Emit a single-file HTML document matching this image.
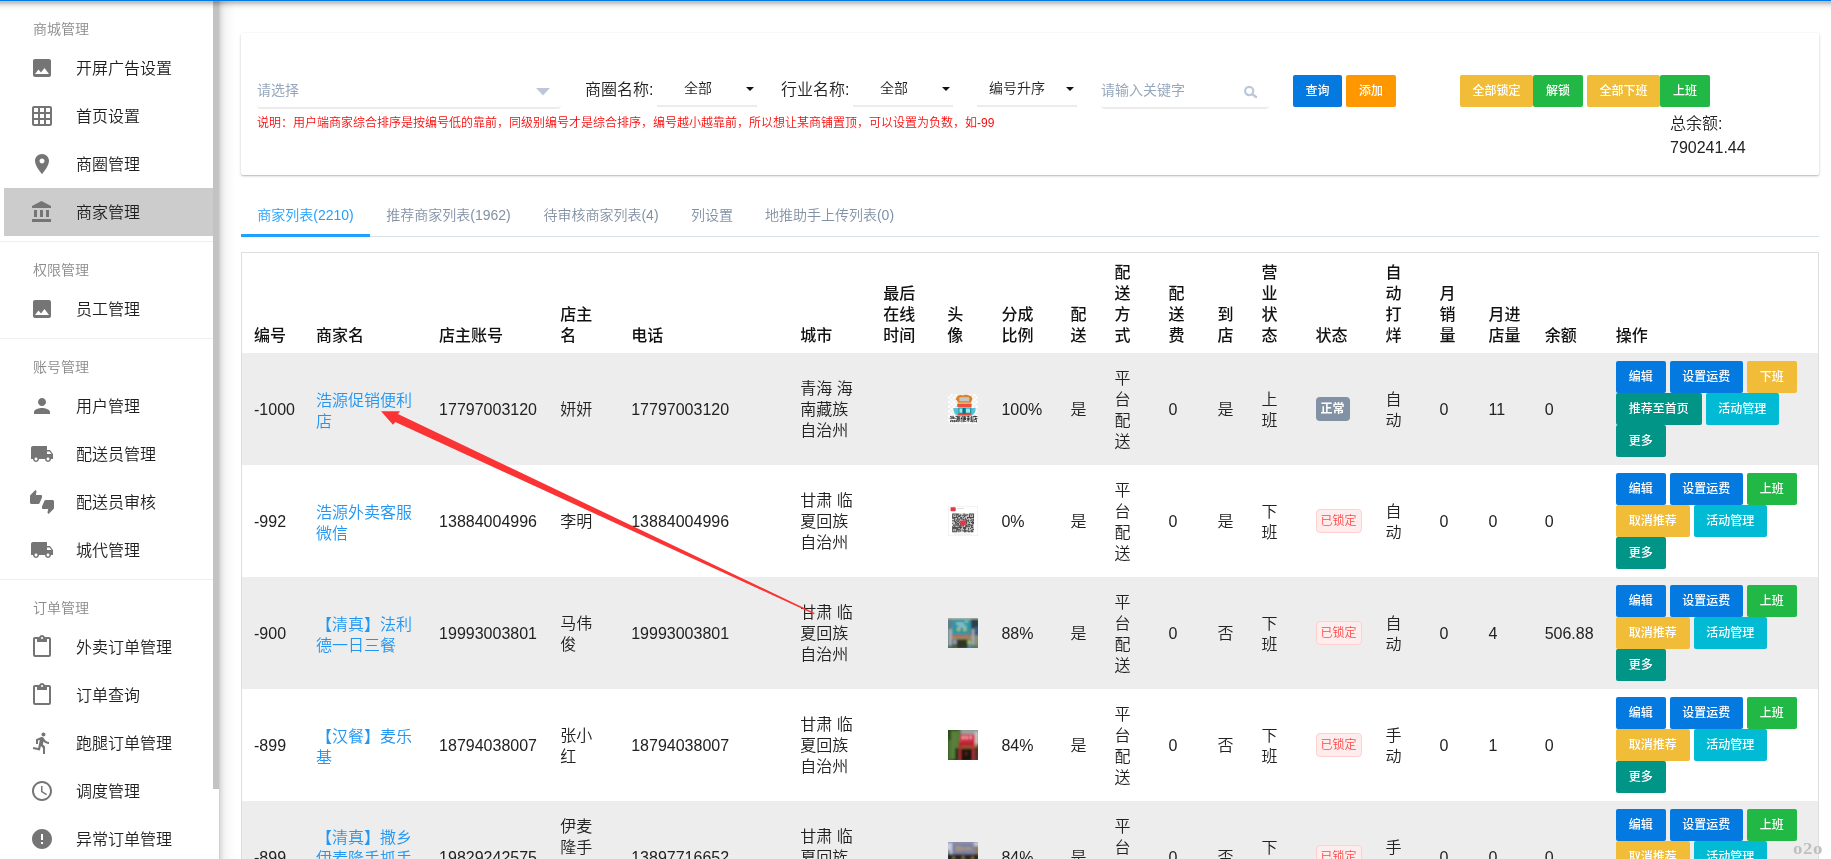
<!DOCTYPE html>
<html lang="zh-CN">
<head>
<meta charset="utf-8">
<title>商家管理</title>
<style>
*{box-sizing:border-box}
html,body{margin:0;padding:0}
body{width:1831px;height:859px;overflow:hidden;background:#fff;position:relative;
 font-family:"Liberation Sans","Noto Sans CJK SC",sans-serif;color:#212121;font-size:14px;font-weight:350}
#all{position:absolute;left:0;top:0;width:1831px;height:859px;will-change:transform;overflow:hidden}
#topbar{position:absolute;left:0;top:0;width:1831px;height:1px;background:#0078e3;z-index:21}
#topsh{position:absolute;left:0;top:1px;width:1831px;height:11px;z-index:20;background:linear-gradient(to bottom,rgba(0,0,0,0.239) 0,rgba(0,0,0,0.239) 0.5px, rgba(0,0,0,0.239) 1.5px, rgba(0,0,0,0.184) 2.5px, rgba(0,0,0,0.129) 3.5px, rgba(0,0,0,0.090) 4.5px, rgba(0,0,0,0.055) 5.5px, rgba(0,0,0,0.035) 6.5px, rgba(0,0,0,0.020) 7.5px, rgba(0,0,0,0.008) 8.5px, rgba(0,0,0,0.004) 9.5px, rgba(0,0,0,0) 10.5px)}
/* ---------- sidebar ---------- */
#side{position:absolute;left:0;top:0;width:219px;height:859px;background:#fff;z-index:10;overflow:hidden;padding-top:1px}
#side .thumb{position:absolute;left:213px;top:0;width:6px;height:789px;background:#c3c3c3}
.grp{border-bottom:1px solid #efefef;padding-bottom:5px}
.grp .lab{height:43px;line-height:56px;padding-left:33px;font-size:14px;color:#8a8a8a}
.it{height:48px;position:relative;margin-left:4px;width:209px}
.it svg{position:absolute;left:26px;top:12px;width:24px;height:24px;fill:#757575}
.it span{position:absolute;left:72px;top:1px;line-height:48px;font-size:16px;color:#1f1f1f;white-space:nowrap}
.it.on{background:#ccc}
#sidesh{position:absolute;left:219px;top:0;width:17px;height:859px;z-index:9;background:linear-gradient(to right,rgba(0,0,0,0.176) 0,rgba(0,0,0,0.176) 0.5px, rgba(0,0,0,0.137) 1.5px, rgba(0,0,0,0.106) 2.5px, rgba(0,0,0,0.086) 3.5px, rgba(0,0,0,0.067) 4.5px, rgba(0,0,0,0.051) 5.5px, rgba(0,0,0,0.043) 6.5px, rgba(0,0,0,0.035) 7.5px, rgba(0,0,0,0.027) 8.5px, rgba(0,0,0,0.024) 9.5px, rgba(0,0,0,0.020) 10.5px, rgba(0,0,0,0.016) 11.5px, rgba(0,0,0,0.012) 12.5px, rgba(0,0,0,0.008) 13.5px, rgba(0,0,0,0.008) 14.5px, rgba(0,0,0,0.004) 15.5px, rgba(0,0,0,0) 16.5px)}
/* ---------- filter card ---------- */
#card{position:absolute;left:241px;top:33px;width:1578px;height:142px;background:#fff;border-radius:2px;
 box-shadow:0 1px 3px 0 rgba(0,0,0,.2),0 1px 1px 0 rgba(0,0,0,.12)}
#card .abs{position:absolute;white-space:nowrap}
.btn{display:inline-block;height:32px;line-height:33px;font-weight:500;text-align:center;color:#fff;font-size:12px;border-radius:2px;vertical-align:top;white-space:nowrap}
.b-blue{background:#0479e0}.b-orange{background:#ff9800}.b-yellow{background:#f1bd39}.b-green{background:#22b845}.b-teal{background:#009587}.b-cyan{background:#00bbd3}
/* ---------- tabs ---------- */
#tabs{position:absolute;left:241px;top:195px;width:1578px;height:42px;border-bottom:1px solid #d9e1ea}
#tabs span{position:absolute;top:0;height:42px;line-height:40px;font-size:14px;color:#8391a5;text-align:center;white-space:nowrap}
#tabs span.on{color:#20a0ff;border-bottom:3px solid #20a0ff}
/* ---------- table ---------- */
#tw{position:absolute;left:241px;top:252px;width:1578px;height:620px;border:1px solid #dedede;border-bottom:0;overflow:hidden;background:#fff}
table{border-collapse:collapse;table-layout:fixed;width:1576px;font-size:16px;line-height:21px;color:#222}
th{font-weight:500;text-align:left;vertical-align:bottom;padding:9px 0 7px 12px;height:100px;color:#111}
td{vertical-align:middle;padding:9px 0 8px 12px;height:112px;word-break:break-all}
td.n{padding:8px 0 8px 12px}
td.c{padding:8px 0 8px 12px}
tr.odd{background:#ededed}
a.lk{color:#2196f3;text-decoration:none;position:relative;top:1px}
.tag{display:inline-block;height:24px;line-height:22px;padding:0;text-align:center;font-size:12px;border-radius:4px;border:1px solid transparent;white-space:nowrap;vertical-align:middle}
.tag.n{background:#8391a5;color:#fff;font-weight:bold}
.tag.d{background:#ffecec;border-color:#ffd0d0;color:#ff4949}
td.op{padding:8px 0 8px 12px;font-size:0;line-height:0}
td.op .btn{margin-right:4px}
.av{display:block;width:30px;height:30px;margin-left:1px}
#arrow{position:absolute;left:0;top:0;width:1831px;height:859px;z-index:5;pointer-events:none}
#wm{position:absolute;left:1793px;top:837px;font-family:"Liberation Serif",serif;font-size:16px;font-weight:bold;color:#bfbfbf;z-index:30;line-height:24px;letter-spacing:.5px;transform:scaleX(1.18);transform-origin:0 0}
</style>
</head>
<body>
<div id="all">
<div id="topbar"></div><div id="topsh"></div><div id="sidesh"></div>
<div id="side"><div class="thumb"></div>
<div class="grp"><div class="lab">商城管理</div>
<div class="it"><svg viewBox="0 0 24 24"><path d="M21 19V5c0-1.1-.9-2-2-2H5c-1.1 0-2 .9-2 2v14c0 1.1.9 2 2 2h14c1.1 0 2-.9 2-2zM8.5 13.5l2.5 3.01L14.5 12l4.5 6H5l3.5-4.5z"/></svg><span>开屏广告设置</span></div>
<div class="it"><svg viewBox="0 0 24 24"><path d="M20 2H4c-1.1 0-2 .9-2 2v16c0 1.1.9 2 2 2h16c1.1 0 2-.9 2-2V4c0-1.1-.9-2-2-2zM8 20H4v-4h4v4zm0-6H4v-4h4v4zm0-6H4V4h4v4zm6 12h-4v-4h4v4zm0-6h-4v-4h4v4zm0-6h-4V4h4v4zm6 12h-4v-4h4v4zm0-6h-4v-4h4v4zm0-6h-4V4h4v4z"/></svg><span>首页设置</span></div>
<div class="it"><svg viewBox="0 0 24 24"><path d="M12 2C8.13 2 5 5.13 5 9c0 5.25 7 13 7 13s7-7.75 7-13c0-3.87-3.13-7-7-7zm0 9.5c-1.38 0-2.5-1.12-2.5-2.5s1.12-2.5 2.5-2.5 2.5 1.12 2.5 2.5-1.12 2.5-2.5 2.5z"/></svg><span>商圈管理</span></div>
<div class="it on"><svg viewBox="0 0 24 24"><path d="M4 10v7h3v-7H4zm6 0v7h3v-7h-3zM2 22h19v-3H2v3zm14-12v7h3v-7h-3zm-4.5-9L2 6v2h19V6l-9.5-5z"/></svg><span>商家管理</span></div>
</div>
<div class="grp"><div class="lab">权限管理</div>
<div class="it"><svg viewBox="0 0 24 24"><path d="M21 19V5c0-1.1-.9-2-2-2H5c-1.1 0-2 .9-2 2v14c0 1.1.9 2 2 2h14c1.1 0 2-.9 2-2zM8.5 13.5l2.5 3.01L14.5 12l4.5 6H5l3.5-4.5z"/></svg><span>员工管理</span></div>
</div>
<div class="grp"><div class="lab">账号管理</div>
<div class="it"><svg viewBox="0 0 24 24"><path d="M12 12c2.21 0 4-1.79 4-4s-1.79-4-4-4-4 1.79-4 4 1.79 4 4 4zm0 2c-2.67 0-8 1.34-8 4v2h16v-2c0-2.66-5.33-4-8-4z"/></svg><span>用户管理</span></div>
<div class="it"><svg viewBox="0 0 24 24"><path d="M20 8h-3V4H3c-1.1 0-2 .9-2 2v11h2c0 1.66 1.34 3 3 3s3-1.34 3-3h6c0 1.66 1.34 3 3 3s3-1.34 3-3h2v-5l-3-4zM6 18.5c-.83 0-1.5-.67-1.5-1.5s.67-1.5 1.5-1.5 1.5.67 1.5 1.5-.67 1.5-1.5 1.5zm13.5-9l1.96 2.5H17V9.5h2.5zm-1.5 9c-.83 0-1.5-.67-1.5-1.5s.67-1.5 1.5-1.5 1.5.67 1.5 1.5-.67 1.5-1.5 1.5z"/></svg><span>配送员管理</span></div>
<div class="it"><svg viewBox="0 0 24 24"><path d="M12 6c0-.55-.45-1-1-1H5.82l.66-3.18.02-.23c0-.31-.13-.59-.33-.8L5.38 0 .44 4.94C.17 5.21 0 5.59 0 6v6.5c0 .83.67 1.5 1.5 1.5h6.75c.62 0 1.15-.38 1.38-.91l2.26-5.29c.07-.17.11-.36.11-.55V6zm10.5 4h-6.75c-.62 0-1.15.38-1.38.91l-2.26 5.29c-.07.17-.11.36-.11.55V18c0 .55.45 1 1 1h5.18l-.66 3.18-.02.24c0 .31.13.59.33.8l.79.78 4.94-4.94c.27-.27.44-.65.44-1.060v-6.500c0-.83-.67-1.5-1.5-1.5z"/></svg><span>配送员审核</span></div>
<div class="it"><svg viewBox="0 0 24 24"><path d="M20 8h-3V4H3c-1.1 0-2 .9-2 2v11h2c0 1.66 1.34 3 3 3s3-1.34 3-3h6c0 1.66 1.34 3 3 3s3-1.34 3-3h2v-5l-3-4zM6 18.5c-.83 0-1.5-.67-1.5-1.5s.67-1.5 1.5-1.5 1.5.67 1.5 1.5-.67 1.5-1.5 1.5zm13.5-9l1.96 2.5H17V9.5h2.5zm-1.5 9c-.83 0-1.5-.67-1.5-1.5s.67-1.5 1.5-1.5 1.5.67 1.5 1.5-.67 1.5-1.5 1.5z"/></svg><span>城代管理</span></div>
</div>
<div class="grp"><div class="lab">订单管理</div>
<div class="it"><svg viewBox="0 0 24 24"><path d="M19 2h-4.180C14.400.840 13.300 0 12 0c-1.300 0-2.400.840-2.820 2H5c-1.100 0-2 .900-2 2v16c0 1.100.900 2 2 2h14c1.100 0 2-.900 2-2V4c0-1.100-.900-2-2-2zm-7 0c.550 0 1 .450 1 1s-.450 1-1 1-1-.450-1-1 .450-1 1-1zm7 18H5V4h2v3h10V4h2v16z"/></svg><span>外卖订单管理</span></div>
<div class="it"><svg viewBox="0 0 24 24"><path d="M19 2h-4.180C14.400.840 13.300 0 12 0c-1.300 0-2.400.840-2.820 2H5c-1.100 0-2 .900-2 2v16c0 1.100.900 2 2 2h14c1.100 0 2-.900 2-2V4c0-1.100-.900-2-2-2zm-7 0c.550 0 1 .450 1 1s-.450 1-1 1-1-.450-1-1 .450-1 1-1zm7 18H5V4h2v3h10V4h2v16z"/></svg><span>订单查询</span></div>
<div class="it"><svg viewBox="0 0 24 24"><path d="M13.490 5.480c1.100 0 2-.900 2-2s-.900-2-2-2-2 .900-2 2 .900 2 2 2zm-3.600 13.900l1-4.400 2.100 2v6h2v-7.500l-2.100-2 .600-3c1.300 1.500 3.300 2.500 5.500 2.500v-2c-1.900 0-3.500-1-4.300-2.400l-1-1.600c-.400-.600-1-1-1.700-1-.300 0-.500.100-.800.100l-5.200 2.200v4.700h2v-3.400l1.800-.700-1.600 8.100-4.900-1-.400 2 7 1.400z"/></svg><span>跑腿订单管理</span></div>
<div class="it"><svg viewBox="0 0 24 24"><path d="M11.990 2C6.470 2 2 6.480 2 12s4.470 10 9.990 10C17.520 22 22 17.520 22 12S17.520 2 11.990 2zM12 20c-4.420 0-8-3.580-8-8s3.580-8 8-8 8 3.580 8 8-3.580 8-8 8zm.5-13H11v6l5.250 3.150.750-1.230-4.500-2.670z"/></svg><span>调度管理</span></div>
<div class="it"><svg viewBox="0 0 24 24"><path d="M12 2C6.480 2 2 6.480 2 12s4.480 10 10 10 10-4.480 10-10S17.520 2 12 2zm1 15h-2v-2h2v2zm0-4h-2V7h2v6z"/></svg><span>异常订单管理</span></div>
</div>
</div>
<div id="card">
<div class="abs" style="left:16px;top:42px;width:304px;height:34px;border-bottom:2px solid #ececec;border-radius:0 0 4px 4px;line-height:30px;font-size:14px;font-weight:400;color:#97a8be">请选择<svg style="position:absolute;left:279px;top:13px" width="14" height="8" viewBox="0 0 14 8"><path d="M0 0h14L7 7.500z" fill="#bcc8d9"/></svg></div>
<div class="abs" style="left:344px;top:45px;font-size:16px;line-height:24px;color:#222">商圈名称:</div>
<div class="abs" style="left:416px;top:42px;width:100px;height:32px;border-bottom:2px solid #ececec;font-size:14px;line-height:26px;padding-left:27px;color:#222">全部<svg style="position:absolute;right:3px;top:12px" width="8" height="4" viewBox="0 0 8 4"><path d="M0 0h8L4 4z" fill="#111"/></svg></div>
<div class="abs" style="left:540px;top:45px;font-size:16px;line-height:24px;color:#222">行业名称:</div>
<div class="abs" style="left:612px;top:42px;width:100px;height:32px;border-bottom:2px solid #ececec;font-size:14px;line-height:26px;padding-left:27px;color:#222">全部<svg style="position:absolute;right:3px;top:12px" width="8" height="4" viewBox="0 0 8 4"><path d="M0 0h8L4 4z" fill="#111"/></svg></div>
<div class="abs" style="left:736px;top:42px;width:100px;height:32px;border-bottom:2px solid #ececec;font-size:14px;line-height:26px;padding-left:12px;color:#222">编号升序<svg style="position:absolute;right:3px;top:12px" width="8" height="4" viewBox="0 0 8 4"><path d="M0 0h8L4 4z" fill="#111"/></svg></div>
<div class="abs" style="left:860px;top:42px;width:168px;height:34px;border-bottom:2px solid #ececec;border-radius:0 0 4px 4px;line-height:30px;font-size:14px;font-weight:400;color:#97a8be">请输入关键字<svg style="position:absolute;left:143px;top:10px" width="14" height="14" viewBox="0 0 14 14"><circle cx="5.200" cy="6" r="4.100" fill="none" stroke="#bcc8d9" stroke-width="2.200"/><path d="M8.500 9.300L12 12" stroke="#bcc8d9" stroke-width="2.400" stroke-linecap="round"/></svg></div>
<div class="abs" style="left:16px;top:83px;font-size:12px;line-height:14px;color:#f90b0b">说明：用户端商家综合排序是按编号低的靠前，同级别编号才是综合排序，编号越小越靠前，所以想让某商铺置顶，可以设置为负数，如-99</div>
<div class="abs" style="left:1052px;top:42px;"><span class="btn b-blue" style="width:49px">查询</span></div>
<div class="abs" style="left:1105px;top:42px;"><span class="btn b-orange" style="width:50px">添加</span></div>
<div class="abs" style="left:1219px;top:42px;"><span class="btn b-yellow" style="width:73px">全部锁定</span></div>
<div class="abs" style="left:1292px;top:42px;"><span class="btn b-green" style="width:50px">解锁</span></div>
<div class="abs" style="left:1346px;top:42px;"><span class="btn b-yellow" style="width:73px">全部下班</span></div>
<div class="abs" style="left:1419px;top:42px;"><span class="btn b-green" style="width:50px">上班</span></div>
<div class="abs" style="left:1429px;top:78px;font-size:16px;line-height:24px;color:#222;white-space:normal;width:90px"><span style="position:relative;top:1px">总余额:</span><br><span style="position:relative;top:1px">790241.44</span></div>
</div>
<div id="tabs">
<span class="on" style="left:0px;width:129px">商家列表(2210)</span>
<span class="" style="left:129px;width:157px">推荐商家列表(1962)</span>
<span class="" style="left:286px;width:148px">待审核商家列表(4)</span>
<span class="" style="left:434px;width:74px">列设置</span>
<span class="" style="left:508px;width:161px">地推助手上传列表(0)</span>
</div>
<div id="tw">
<table><colgroup><col style="width:62px"><col style="width:123px"><col style="width:121px"><col style="width:71px"><col style="width:169px"><col style="width:83px"><col style="width:64px"><col style="width:54px"><col style="width:69px"><col style="width:44px"><col style="width:54px"><col style="width:49px"><col style="width:44px"><col style="width:54px"><col style="width:70px"><col style="width:54px"><col style="width:49px"><col style="width:56px"><col style="width:71px"><col style="width:214px"></colgroup>
<thead><tr><th>编号</th><th>商家名</th><th>店主账号</th><th>店主<br>名</th><th>电话</th><th>城市</th><th>最后<br>在线<br>时间</th><th>头<br>像</th><th>分成<br>比例</th><th>配<br>送</th><th>配<br>送<br>方<br>式</th><th>配<br>送<br>费</th><th>到<br>店</th><th>营<br>业<br>状<br>态</th><th>状态</th><th>自<br>动<br>打<br>烊</th><th>月<br>销<br>量</th><th>月进<br>店量</th><th>余额</th><th>操作</th></tr></thead><tbody>
<tr class="odd"><td class="n">-1000</td><td><a class="lk">浩源促销便利<br>店</a></td><td class="n">17797003120</td><td>妍妍</td><td class="n">17797003120</td><td>青海 海<br>南藏族<br>自治州</td><td></td><td class="c"><svg class="av" viewBox="0 0 30 30"><defs><pattern id="ck" width="4.600" height="4.600" patternUnits="userSpaceOnUse"><rect width="4.600" height="4.600" fill="#fff"/><rect width="2.300" height="2.300" fill="#ececec"/><rect x="2.300" y="2.300" width="2.300" height="2.300" fill="#ececec"/></pattern><filter id="bl1"><feGaussianBlur stdDeviation="0.350"/></filter></defs><rect width="30" height="30" fill="url(#ck)"/><g filter="url(#bl1)"><polygon points="7.500,5.500 9.500,2 12.500,.800 15,1.400 17.500,.600 20.500,1.200 23,2 24.500,4.600 23,8.800 10,8.800 9,6.500" fill="#d8842c"/><rect x="11.400" y="3.200" width="9.800" height="4" rx=".500" fill="#c6c6c6"/><rect x="9.200" y="9.400" width="14.400" height="3.800" rx=".500" fill="#e8523f"/><path d="M5.400 14h22.200c.300 4-2 7.400-5 8H10.400c-3-.600-5.300-4-5-8z" fill="#58c2d2"/><rect x="10.400" y="13.600" width="12.900" height="6.800" fill="#2493ab"/><rect x="11.500" y="14.500" width="2.700" height="4.200" fill="#9be8ec"/><rect x="18" y="14.500" width="4" height="4.200" fill="#9be8ec"/><rect x="15" y="14" width="2.200" height="6" fill="#0f6f88"/><rect x="9.800" y="20" width="13.200" height="1" fill="#d5503c"/><text x="15.600" y="27.300" font-size="5.700" font-weight="bold" text-anchor="middle" fill="#151515" font-family="'Noto Sans CJK SC',sans-serif">浩源便利店</text></g></svg></td><td class="n">100%</td><td>是</td><td>平<br>台<br>配<br>送</td><td class="n">0</td><td>是</td><td>上<br>班</td><td class="c"><span class="tag n" style="width:34px">正常</span></td><td>自<br>动</td><td class="n">0</td><td class="n">11</td><td class="n">0</td><td class="op"><span class="btn b-blue" style="width:50px">编辑</span><span class="btn b-blue" style="width:73px">设置运费</span><span class="btn b-yellow" style="width:50px">下班</span><br><span class="btn b-teal" style="width:86px">推荐至首页</span><span class="btn b-cyan" style="width:73px">活动管理</span><br><span class="btn b-teal" style="width:50px">更多</span></td></tr>
<tr class="even"><td class="n">-992</td><td><a class="lk">浩源外卖客服<br>微信</a></td><td class="n">13884004996</td><td>李明</td><td class="n">13884004996</td><td>甘肃 临<br>夏回族<br>自治州</td><td></td><td class="c"><svg class="av" viewBox="0 0 30 30"><defs><filter id="bl2"><feGaussianBlur stdDeviation="0.380"/></filter></defs><rect width="30" height="30" fill="#fff"/><rect x=".250" y=".250" width="29.500" height="29.500" fill="none" stroke="#e9e9e9" stroke-width=".600"/><g filter="url(#bl2)"><rect x="2.500" y="1.200" width="5.200" height="4.100" rx=".800" fill="#e5364a"/><rect x="9" y="2.200" width="5" height=".700" fill="#cfcfcf"/><rect x="14" y="2.200" width="1.800" height=".700" fill="#b9d3ee"/><rect x="4.200" y="7.600" width="21.800" height="18.600" fill="#c9c9c9"/><g fill="#343434"><rect x="4.20" y="7.60" width="1.03" height="0.89"/><rect x="4.20" y="8.45" width="1.03" height="0.89"/><rect x="4.20" y="9.29" width="1.03" height="0.89"/><rect x="4.20" y="10.14" width="1.03" height="0.89"/><rect x="4.20" y="10.98" width="1.03" height="0.89"/><rect x="4.20" y="11.83" width="1.03" height="0.89"/><rect x="4.20" y="14.36" width="1.03" height="0.89"/><rect x="4.20" y="16.90" width="1.03" height="0.89"/><rect x="4.20" y="20.28" width="1.03" height="0.89"/><rect x="4.20" y="21.13" width="1.03" height="0.89"/><rect x="4.20" y="21.97" width="1.03" height="0.89"/><rect x="4.20" y="22.82" width="1.03" height="0.89"/><rect x="4.20" y="23.66" width="1.03" height="0.89"/><rect x="4.20" y="24.51" width="1.03" height="0.89"/><rect x="4.20" y="25.35" width="1.03" height="0.89"/><rect x="5.19" y="7.60" width="1.03" height="0.89"/><rect x="5.19" y="10.98" width="1.03" height="0.89"/><rect x="5.19" y="11.83" width="1.03" height="0.89"/><rect x="5.19" y="14.36" width="1.03" height="0.89"/><rect x="5.19" y="18.59" width="1.03" height="0.89"/><rect x="5.19" y="19.44" width="1.03" height="0.89"/><rect x="5.19" y="21.13" width="1.03" height="0.89"/><rect x="5.19" y="21.97" width="1.03" height="0.89"/><rect x="5.19" y="25.35" width="1.03" height="0.89"/><rect x="6.18" y="7.60" width="1.03" height="0.89"/><rect x="6.18" y="9.29" width="1.03" height="0.89"/><rect x="6.18" y="10.98" width="1.03" height="0.89"/><rect x="6.18" y="11.83" width="1.03" height="0.89"/><rect x="6.18" y="12.67" width="1.03" height="0.89"/><rect x="6.18" y="13.52" width="1.03" height="0.89"/><rect x="6.18" y="14.36" width="1.03" height="0.89"/><rect x="6.18" y="15.21" width="1.03" height="0.89"/><rect x="6.18" y="18.59" width="1.03" height="0.89"/><rect x="6.18" y="20.28" width="1.03" height="0.89"/><rect x="6.18" y="21.13" width="1.03" height="0.89"/><rect x="6.18" y="21.97" width="1.03" height="0.89"/><rect x="6.18" y="23.66" width="1.03" height="0.89"/><rect x="6.18" y="25.35" width="1.03" height="0.89"/><rect x="7.17" y="7.60" width="1.03" height="0.89"/><rect x="7.17" y="10.98" width="1.03" height="0.89"/><rect x="7.17" y="15.21" width="1.03" height="0.89"/><rect x="7.17" y="16.05" width="1.03" height="0.89"/><rect x="7.17" y="16.90" width="1.03" height="0.89"/><rect x="7.17" y="17.75" width="1.03" height="0.89"/><rect x="7.17" y="19.44" width="1.03" height="0.89"/><rect x="7.17" y="21.13" width="1.03" height="0.89"/><rect x="7.17" y="21.97" width="1.03" height="0.89"/><rect x="7.17" y="25.35" width="1.03" height="0.89"/><rect x="8.16" y="7.60" width="1.03" height="0.89"/><rect x="8.16" y="8.45" width="1.03" height="0.89"/><rect x="8.16" y="9.29" width="1.03" height="0.89"/><rect x="8.16" y="10.14" width="1.03" height="0.89"/><rect x="8.16" y="10.98" width="1.03" height="0.89"/><rect x="8.16" y="13.52" width="1.03" height="0.89"/><rect x="8.16" y="14.36" width="1.03" height="0.89"/><rect x="8.16" y="16.05" width="1.03" height="0.89"/><rect x="8.16" y="17.75" width="1.03" height="0.89"/><rect x="8.16" y="18.59" width="1.03" height="0.89"/><rect x="8.16" y="21.13" width="1.03" height="0.89"/><rect x="8.16" y="21.97" width="1.03" height="0.89"/><rect x="8.16" y="22.82" width="1.03" height="0.89"/><rect x="8.16" y="23.66" width="1.03" height="0.89"/><rect x="8.16" y="24.51" width="1.03" height="0.89"/><rect x="8.16" y="25.35" width="1.03" height="0.89"/><rect x="9.15" y="7.60" width="1.03" height="0.89"/><rect x="9.15" y="8.45" width="1.03" height="0.89"/><rect x="9.15" y="10.98" width="1.03" height="0.89"/><rect x="9.15" y="11.83" width="1.03" height="0.89"/><rect x="9.15" y="12.67" width="1.03" height="0.89"/><rect x="9.15" y="13.52" width="1.03" height="0.89"/><rect x="9.15" y="15.21" width="1.03" height="0.89"/><rect x="9.15" y="16.90" width="1.03" height="0.89"/><rect x="9.15" y="17.75" width="1.03" height="0.89"/><rect x="9.15" y="19.44" width="1.03" height="0.89"/><rect x="9.15" y="21.13" width="1.03" height="0.89"/><rect x="9.15" y="21.97" width="1.03" height="0.89"/><rect x="9.15" y="22.82" width="1.03" height="0.89"/><rect x="9.15" y="23.66" width="1.03" height="0.89"/><rect x="10.15" y="7.60" width="1.03" height="0.89"/><rect x="10.15" y="9.29" width="1.03" height="0.89"/><rect x="10.15" y="10.14" width="1.03" height="0.89"/><rect x="10.15" y="12.67" width="1.03" height="0.89"/><rect x="10.15" y="14.36" width="1.03" height="0.89"/><rect x="10.15" y="15.21" width="1.03" height="0.89"/><rect x="10.15" y="16.90" width="1.03" height="0.89"/><rect x="10.15" y="17.75" width="1.03" height="0.89"/><rect x="10.15" y="18.59" width="1.03" height="0.89"/><rect x="10.15" y="19.44" width="1.03" height="0.89"/><rect x="10.15" y="21.13" width="1.03" height="0.89"/><rect x="10.15" y="22.82" width="1.03" height="0.89"/><rect x="10.15" y="23.66" width="1.03" height="0.89"/><rect x="10.15" y="25.35" width="1.03" height="0.89"/><rect x="11.14" y="9.29" width="1.03" height="0.89"/><rect x="11.14" y="10.14" width="1.03" height="0.89"/><rect x="11.14" y="12.67" width="1.03" height="0.89"/><rect x="11.14" y="13.52" width="1.03" height="0.89"/><rect x="11.14" y="16.05" width="1.03" height="0.89"/><rect x="11.14" y="19.44" width="1.03" height="0.89"/><rect x="11.14" y="20.28" width="1.03" height="0.89"/><rect x="11.14" y="21.13" width="1.03" height="0.89"/><rect x="11.14" y="22.82" width="1.03" height="0.89"/><rect x="11.14" y="24.51" width="1.03" height="0.89"/><rect x="12.13" y="8.45" width="1.03" height="0.89"/><rect x="12.13" y="9.29" width="1.03" height="0.89"/><rect x="12.13" y="10.98" width="1.03" height="0.89"/><rect x="12.13" y="11.83" width="1.03" height="0.89"/><rect x="12.13" y="15.21" width="1.03" height="0.89"/><rect x="12.13" y="16.90" width="1.03" height="0.89"/><rect x="12.13" y="17.75" width="1.03" height="0.89"/><rect x="12.13" y="18.59" width="1.03" height="0.89"/><rect x="12.13" y="19.44" width="1.03" height="0.89"/><rect x="12.13" y="20.28" width="1.03" height="0.89"/><rect x="12.13" y="21.13" width="1.03" height="0.89"/><rect x="12.13" y="21.97" width="1.03" height="0.89"/><rect x="12.13" y="23.66" width="1.03" height="0.89"/><rect x="12.13" y="24.51" width="1.03" height="0.89"/><rect x="13.12" y="10.98" width="1.03" height="0.89"/><rect x="13.12" y="11.83" width="1.03" height="0.89"/><rect x="13.12" y="12.67" width="1.03" height="0.89"/><rect x="13.12" y="16.05" width="1.03" height="0.89"/><rect x="13.12" y="17.75" width="1.03" height="0.89"/><rect x="13.12" y="19.44" width="1.03" height="0.89"/><rect x="13.12" y="21.13" width="1.03" height="0.89"/><rect x="14.11" y="9.29" width="1.03" height="0.89"/><rect x="14.11" y="12.67" width="1.03" height="0.89"/><rect x="14.11" y="16.90" width="1.03" height="0.89"/><rect x="14.11" y="19.44" width="1.03" height="0.89"/><rect x="14.11" y="23.66" width="1.03" height="0.89"/><rect x="15.10" y="7.60" width="1.03" height="0.89"/><rect x="15.10" y="9.29" width="1.03" height="0.89"/><rect x="15.10" y="10.98" width="1.03" height="0.89"/><rect x="15.10" y="12.67" width="1.03" height="0.89"/><rect x="15.10" y="13.52" width="1.03" height="0.89"/><rect x="15.10" y="15.21" width="1.03" height="0.89"/><rect x="15.10" y="17.75" width="1.03" height="0.89"/><rect x="15.10" y="18.59" width="1.03" height="0.89"/><rect x="15.10" y="19.44" width="1.03" height="0.89"/><rect x="15.10" y="21.13" width="1.03" height="0.89"/><rect x="15.10" y="21.97" width="1.03" height="0.89"/><rect x="15.10" y="24.51" width="1.03" height="0.89"/><rect x="16.09" y="7.60" width="1.03" height="0.89"/><rect x="16.09" y="9.29" width="1.03" height="0.89"/><rect x="16.09" y="10.14" width="1.03" height="0.89"/><rect x="16.09" y="13.52" width="1.03" height="0.89"/><rect x="16.09" y="15.21" width="1.03" height="0.89"/><rect x="16.09" y="16.05" width="1.03" height="0.89"/><rect x="16.09" y="16.90" width="1.03" height="0.89"/><rect x="16.09" y="21.13" width="1.03" height="0.89"/><rect x="16.09" y="21.97" width="1.03" height="0.89"/><rect x="16.09" y="22.82" width="1.03" height="0.89"/><rect x="16.09" y="23.66" width="1.03" height="0.89"/><rect x="16.09" y="24.51" width="1.03" height="0.89"/><rect x="16.09" y="25.35" width="1.03" height="0.89"/><rect x="17.08" y="8.45" width="1.03" height="0.89"/><rect x="17.08" y="9.29" width="1.03" height="0.89"/><rect x="17.08" y="11.83" width="1.03" height="0.89"/><rect x="17.08" y="12.67" width="1.03" height="0.89"/><rect x="17.08" y="13.52" width="1.03" height="0.89"/><rect x="17.08" y="15.21" width="1.03" height="0.89"/><rect x="17.08" y="17.75" width="1.03" height="0.89"/><rect x="17.08" y="19.44" width="1.03" height="0.89"/><rect x="17.08" y="20.28" width="1.03" height="0.89"/><rect x="17.08" y="21.13" width="1.03" height="0.89"/><rect x="17.08" y="21.97" width="1.03" height="0.89"/><rect x="17.08" y="23.66" width="1.03" height="0.89"/><rect x="17.08" y="24.51" width="1.03" height="0.89"/><rect x="17.08" y="25.35" width="1.03" height="0.89"/><rect x="18.07" y="8.45" width="1.03" height="0.89"/><rect x="18.07" y="13.52" width="1.03" height="0.89"/><rect x="18.07" y="14.36" width="1.03" height="0.89"/><rect x="18.07" y="15.21" width="1.03" height="0.89"/><rect x="18.07" y="16.05" width="1.03" height="0.89"/><rect x="18.07" y="16.90" width="1.03" height="0.89"/><rect x="18.07" y="18.59" width="1.03" height="0.89"/><rect x="18.07" y="19.44" width="1.03" height="0.89"/><rect x="18.07" y="20.28" width="1.03" height="0.89"/><rect x="18.07" y="24.51" width="1.03" height="0.89"/><rect x="19.06" y="8.45" width="1.03" height="0.89"/><rect x="19.06" y="10.98" width="1.03" height="0.89"/><rect x="19.06" y="11.83" width="1.03" height="0.89"/><rect x="19.06" y="14.36" width="1.03" height="0.89"/><rect x="19.06" y="18.59" width="1.03" height="0.89"/><rect x="19.06" y="20.28" width="1.03" height="0.89"/><rect x="19.06" y="24.51" width="1.03" height="0.89"/><rect x="20.05" y="10.98" width="1.03" height="0.89"/><rect x="20.05" y="13.52" width="1.03" height="0.89"/><rect x="20.05" y="14.36" width="1.03" height="0.89"/><rect x="20.05" y="15.21" width="1.03" height="0.89"/><rect x="20.05" y="17.75" width="1.03" height="0.89"/><rect x="20.05" y="18.59" width="1.03" height="0.89"/><rect x="20.05" y="20.28" width="1.03" height="0.89"/><rect x="20.05" y="21.97" width="1.03" height="0.89"/><rect x="20.05" y="22.82" width="1.03" height="0.89"/><rect x="20.05" y="24.51" width="1.03" height="0.89"/><rect x="20.05" y="25.35" width="1.03" height="0.89"/><rect x="21.05" y="7.60" width="1.03" height="0.89"/><rect x="21.05" y="8.45" width="1.03" height="0.89"/><rect x="21.05" y="9.29" width="1.03" height="0.89"/><rect x="21.05" y="10.14" width="1.03" height="0.89"/><rect x="21.05" y="10.98" width="1.03" height="0.89"/><rect x="21.05" y="16.05" width="1.03" height="0.89"/><rect x="21.05" y="17.75" width="1.03" height="0.89"/><rect x="21.05" y="18.59" width="1.03" height="0.89"/><rect x="21.05" y="20.28" width="1.03" height="0.89"/><rect x="21.05" y="25.35" width="1.03" height="0.89"/><rect x="22.04" y="7.60" width="1.03" height="0.89"/><rect x="22.04" y="10.98" width="1.03" height="0.89"/><rect x="22.04" y="11.83" width="1.03" height="0.89"/><rect x="22.04" y="14.36" width="1.03" height="0.89"/><rect x="22.04" y="18.59" width="1.03" height="0.89"/><rect x="22.04" y="21.97" width="1.03" height="0.89"/><rect x="22.04" y="24.51" width="1.03" height="0.89"/><rect x="23.03" y="7.60" width="1.03" height="0.89"/><rect x="23.03" y="9.29" width="1.03" height="0.89"/><rect x="23.03" y="10.98" width="1.03" height="0.89"/><rect x="23.03" y="12.67" width="1.03" height="0.89"/><rect x="23.03" y="14.36" width="1.03" height="0.89"/><rect x="23.03" y="16.05" width="1.03" height="0.89"/><rect x="23.03" y="18.59" width="1.03" height="0.89"/><rect x="23.03" y="19.44" width="1.03" height="0.89"/><rect x="23.03" y="20.28" width="1.03" height="0.89"/><rect x="23.03" y="21.13" width="1.03" height="0.89"/><rect x="23.03" y="23.66" width="1.03" height="0.89"/><rect x="23.03" y="24.51" width="1.03" height="0.89"/><rect x="23.03" y="25.35" width="1.03" height="0.89"/><rect x="24.02" y="7.60" width="1.03" height="0.89"/><rect x="24.02" y="10.98" width="1.03" height="0.89"/><rect x="24.02" y="13.52" width="1.03" height="0.89"/><rect x="24.02" y="15.21" width="1.03" height="0.89"/><rect x="24.02" y="16.05" width="1.03" height="0.89"/><rect x="24.02" y="16.90" width="1.03" height="0.89"/><rect x="24.02" y="18.59" width="1.03" height="0.89"/><rect x="24.02" y="19.44" width="1.03" height="0.89"/><rect x="24.02" y="21.13" width="1.03" height="0.89"/><rect x="24.02" y="22.82" width="1.03" height="0.89"/><rect x="24.02" y="24.51" width="1.03" height="0.89"/><rect x="24.02" y="25.35" width="1.03" height="0.89"/><rect x="25.01" y="7.60" width="1.03" height="0.89"/><rect x="25.01" y="8.45" width="1.03" height="0.89"/><rect x="25.01" y="9.29" width="1.03" height="0.89"/><rect x="25.01" y="10.14" width="1.03" height="0.89"/><rect x="25.01" y="10.98" width="1.03" height="0.89"/><rect x="25.01" y="12.67" width="1.03" height="0.89"/><rect x="25.01" y="13.52" width="1.03" height="0.89"/><rect x="25.01" y="14.36" width="1.03" height="0.89"/><rect x="25.01" y="16.05" width="1.03" height="0.89"/><rect x="25.01" y="16.90" width="1.03" height="0.89"/><rect x="25.01" y="22.82" width="1.03" height="0.89"/></g><rect x="12.300" y="14.400" width="5.400" height="4.600" rx=".800" fill="#e5364a"/><rect x="6" y="27.800" width="18" height=".600" fill="#dcdcdc"/></g></svg></td><td class="n">0%</td><td>是</td><td>平<br>台<br>配<br>送</td><td class="n">0</td><td>是</td><td>下<br>班</td><td class="c"><span class="tag d" style="width:46px">已锁定</span></td><td>自<br>动</td><td class="n">0</td><td class="n">0</td><td class="n">0</td><td class="op"><span class="btn b-blue" style="width:50px">编辑</span><span class="btn b-blue" style="width:73px">设置运费</span><span class="btn b-green" style="width:50px">上班</span><br><span class="btn b-yellow" style="width:74px">取消推荐</span><span class="btn b-cyan" style="width:73px">活动管理</span><br><span class="btn b-teal" style="width:50px">更多</span></td></tr>
<tr class="odd"><td class="n">-900</td><td><a class="lk">【清真】法利<br>德一日三餐</a></td><td class="n">19993003801</td><td>马伟<br>俊</td><td class="n">19993003801</td><td>甘肃 临<br>夏回族<br>自治州</td><td></td><td class="c"><svg class="av" viewBox="0 0 30 30"><defs><filter id="bl3"><feGaussianBlur stdDeviation="1.000"/></filter><clipPath id="c3"><rect width="30" height="30"/></clipPath></defs><g clip-path="url(#c3)"><rect width="30" height="30" fill="#6c7f86"/><g filter="url(#bl3)"><rect x="-2" y="-2" width="34" height="4" fill="#b9b7a8"/><rect x="-1" y="1" width="5" height="30" fill="#5d7d8a"/><rect x="23" y="1" width="8" height="16" fill="#27414f"/><rect x="26" y="9" width="5" height="7" fill="#3c5a8a"/><rect x="4.200" y="1.200" width="18.400" height="15.400" fill="#2c97a6"/><rect x="8" y="5" width="8" height=".900" fill="#d7eef0"/><rect x="10" y="7.700" width="8.500" height="1" fill="#e3f3f4"/><rect x="17" y="3" width="3" height=".800" fill="#e3f3f4"/><rect x="9.300" y="10" width="2.600" height="2.800" fill="#d8c84a"/><rect x="15.500" y="10" width="2.600" height="2.800" fill="#d8c84a"/><rect x="4" y="16.800" width="19" height="1.600" fill="#b65a50"/><rect x="3" y="18.400" width="21" height="3" fill="#a88a5c"/><rect x="1.200" y="11" width="2.400" height="19" fill="#b8bdbd"/><rect x="23.800" y="11" width="2.400" height="19" fill="#aeb4b4"/><rect x="26.500" y="17" width="4" height="13" fill="#8c8f7a"/><rect x="4" y="21.400" width="19.500" height="9" fill="#2d3524"/><rect x="5" y="21.500" width="3.600" height="5" fill="#9aa0b8"/><rect x="19.500" y="22" width="3.500" height="4" fill="#a9c25a"/><rect x="19.800" y="26" width="3.500" height="4" fill="#5a8fb0"/><rect x="0" y="27.500" width="9" height="3" fill="#4a6a3a"/><rect x="24" y="27" width="6" height="3" fill="#4e7a4a"/></g></g></svg></td><td class="n">88%</td><td>是</td><td>平<br>台<br>配<br>送</td><td class="n">0</td><td>否</td><td>下<br>班</td><td class="c"><span class="tag d" style="width:46px">已锁定</span></td><td>自<br>动</td><td class="n">0</td><td class="n">4</td><td class="n">506.88</td><td class="op"><span class="btn b-blue" style="width:50px">编辑</span><span class="btn b-blue" style="width:73px">设置运费</span><span class="btn b-green" style="width:50px">上班</span><br><span class="btn b-yellow" style="width:74px">取消推荐</span><span class="btn b-cyan" style="width:73px">活动管理</span><br><span class="btn b-teal" style="width:50px">更多</span></td></tr>
<tr class="even"><td class="n">-899</td><td><a class="lk">【汉餐】麦乐<br>基</a></td><td class="n">18794038007</td><td>张小<br>红</td><td class="n">18794038007</td><td>甘肃 临<br>夏回族<br>自治州</td><td></td><td class="c"><svg class="av" viewBox="0 0 30 30"><defs><filter id="bl4"><feGaussianBlur stdDeviation="1.000"/></filter><clipPath id="c4"><rect width="30" height="30"/></clipPath></defs><g clip-path="url(#c4)"><rect width="30" height="30" fill="#3f5a25"/><g filter="url(#bl4)"><rect x="-2" y="-2" width="12" height="34" fill="#2f4a1c"/><rect x="3" y="1" width="7" height="28" fill="#58803a"/><rect x="0" y="10" width="3" height="20" fill="#4a7230"/><rect x="7" y="18" width="4" height="12" fill="#27331a"/><rect x="12" y="-1" width="19" height="6" fill="#9aa3a0"/><rect x="26.500" y="2" width="4" height="12" fill="#c9c9c9"/><rect x="10" y="0" width="3" height="12" fill="#4f7434"/><rect x="12" y="4.200" width="15" height="8.600" rx="1" fill="#d62c47"/><rect x="14.200" y="6" width="1.700" height="3" fill="#f0cfd0"/><rect x="17.800" y="6" width="1.700" height="3" fill="#f0cfd0"/><rect x="21.800" y="5.600" width="1.700" height="3.200" fill="#f0cfd0"/><rect x="10.500" y="12.500" width="16.500" height="3.400" fill="#b8202f"/><rect x="12.500" y="16" width="13.500" height="2.600" fill="#a0522f"/><rect x="10.800" y="16" width="2" height="15" fill="#c02636"/><rect x="24.300" y="14" width="2" height="17" fill="#d22d44"/><rect x="13" y="18.800" width="11.200" height="12" fill="#15170f"/><rect x="17" y="22" width="2.500" height="3.500" fill="#5a1c1c"/><rect x="26.500" y="14" width="4" height="16" fill="#5a2a26"/><rect x="27" y="14" width="2" height="3" fill="#b0a040"/></g></g></svg></td><td class="n">84%</td><td>是</td><td>平<br>台<br>配<br>送</td><td class="n">0</td><td>否</td><td>下<br>班</td><td class="c"><span class="tag d" style="width:46px">已锁定</span></td><td>手<br>动</td><td class="n">0</td><td class="n">1</td><td class="n">0</td><td class="op"><span class="btn b-blue" style="width:50px">编辑</span><span class="btn b-blue" style="width:73px">设置运费</span><span class="btn b-green" style="width:50px">上班</span><br><span class="btn b-yellow" style="width:74px">取消推荐</span><span class="btn b-cyan" style="width:73px">活动管理</span><br><span class="btn b-teal" style="width:50px">更多</span></td></tr>
<tr class="odd"><td class="n">-899</td><td><a class="lk">【清真】撒乡<br>伊麦隆手抓手<br>抓饭</a></td><td class="n">19829242575</td><td>伊麦<br>隆手<br>抓手<br>抓饭</td><td class="n">13897716652</td><td>甘肃 临<br>夏回族<br>自治州</td><td></td><td class="c"><svg class="av" viewBox="0 0 30 30"><defs><filter id="bl5"><feGaussianBlur stdDeviation="1.000"/></filter><clipPath id="c5"><rect width="30" height="30"/></clipPath></defs><g clip-path="url(#c5)"><rect width="30" height="30" fill="#4a4a4e"/><g filter="url(#bl5)"><rect x="-2" y="-2" width="34" height="14" fill="#8d90a8"/><rect x="-1" y="1" width="5" height="12" fill="#c9cde0"/><rect x="26" y="0" width="5" height="5" fill="#c3c9dc"/><rect x="26.500" y="4" width="4" height="10" fill="#8a7a5a"/><rect x="5" y="2" width="20.500" height="9.500" fill="#7a7ea8"/><rect x="8" y="4" width="1.300" height="5" fill="#c8a84a"/><rect x="10.600" y="3.600" width="1.300" height="5.600" fill="#c8a84a"/><rect x="13.300" y="4.400" width="1.300" height="4.400" fill="#c8a84a"/><rect x="16.200" y="4.800" width="1.300" height="3.600" fill="#c8a84a"/><rect x="19" y="4.800" width="1.300" height="3.600" fill="#c8a84a"/><rect x="21.600" y="4.800" width="1.300" height="3.600" fill="#c8a84a"/><rect x="-1" y="12" width="32" height="20" fill="#2c2a2a"/><rect x="0" y="8" width="1.500" height="22" fill="#1e2630"/><rect x="5" y="14" width="1.200" height="16" fill="#a8863a"/><rect x="14.500" y="13.500" width="1.200" height="16" fill="#c8a040"/><rect x="24" y="14" width="1.200" height="16" fill="#a8863a"/></g></g></svg></td><td class="n">84%</td><td>是</td><td>平<br>台<br>配<br>送</td><td class="n">0</td><td>否</td><td>下<br>班</td><td class="c"><span class="tag d" style="width:46px">已锁定</span></td><td>手<br>动</td><td class="n">0</td><td class="n">0</td><td class="n">0</td><td class="op"><span class="btn b-blue" style="width:50px">编辑</span><span class="btn b-blue" style="width:73px">设置运费</span><span class="btn b-green" style="width:50px">上班</span><br><span class="btn b-yellow" style="width:74px">取消推荐</span><span class="btn b-cyan" style="width:73px">活动管理</span><br><span class="btn b-teal" style="width:50px">更多</span></td></tr>
</tbody></table>
</div>
<svg id="arrow" viewBox="0 0 1831 859"><polygon points="381,411.300 400,411.300 397.900,413.900 814.700,613 814.100,614.200 395.300,422.100 393,424.700" fill="#fa3434"/></svg>
<div id="wm">o2o</div>
</div>
</body>
</html>
